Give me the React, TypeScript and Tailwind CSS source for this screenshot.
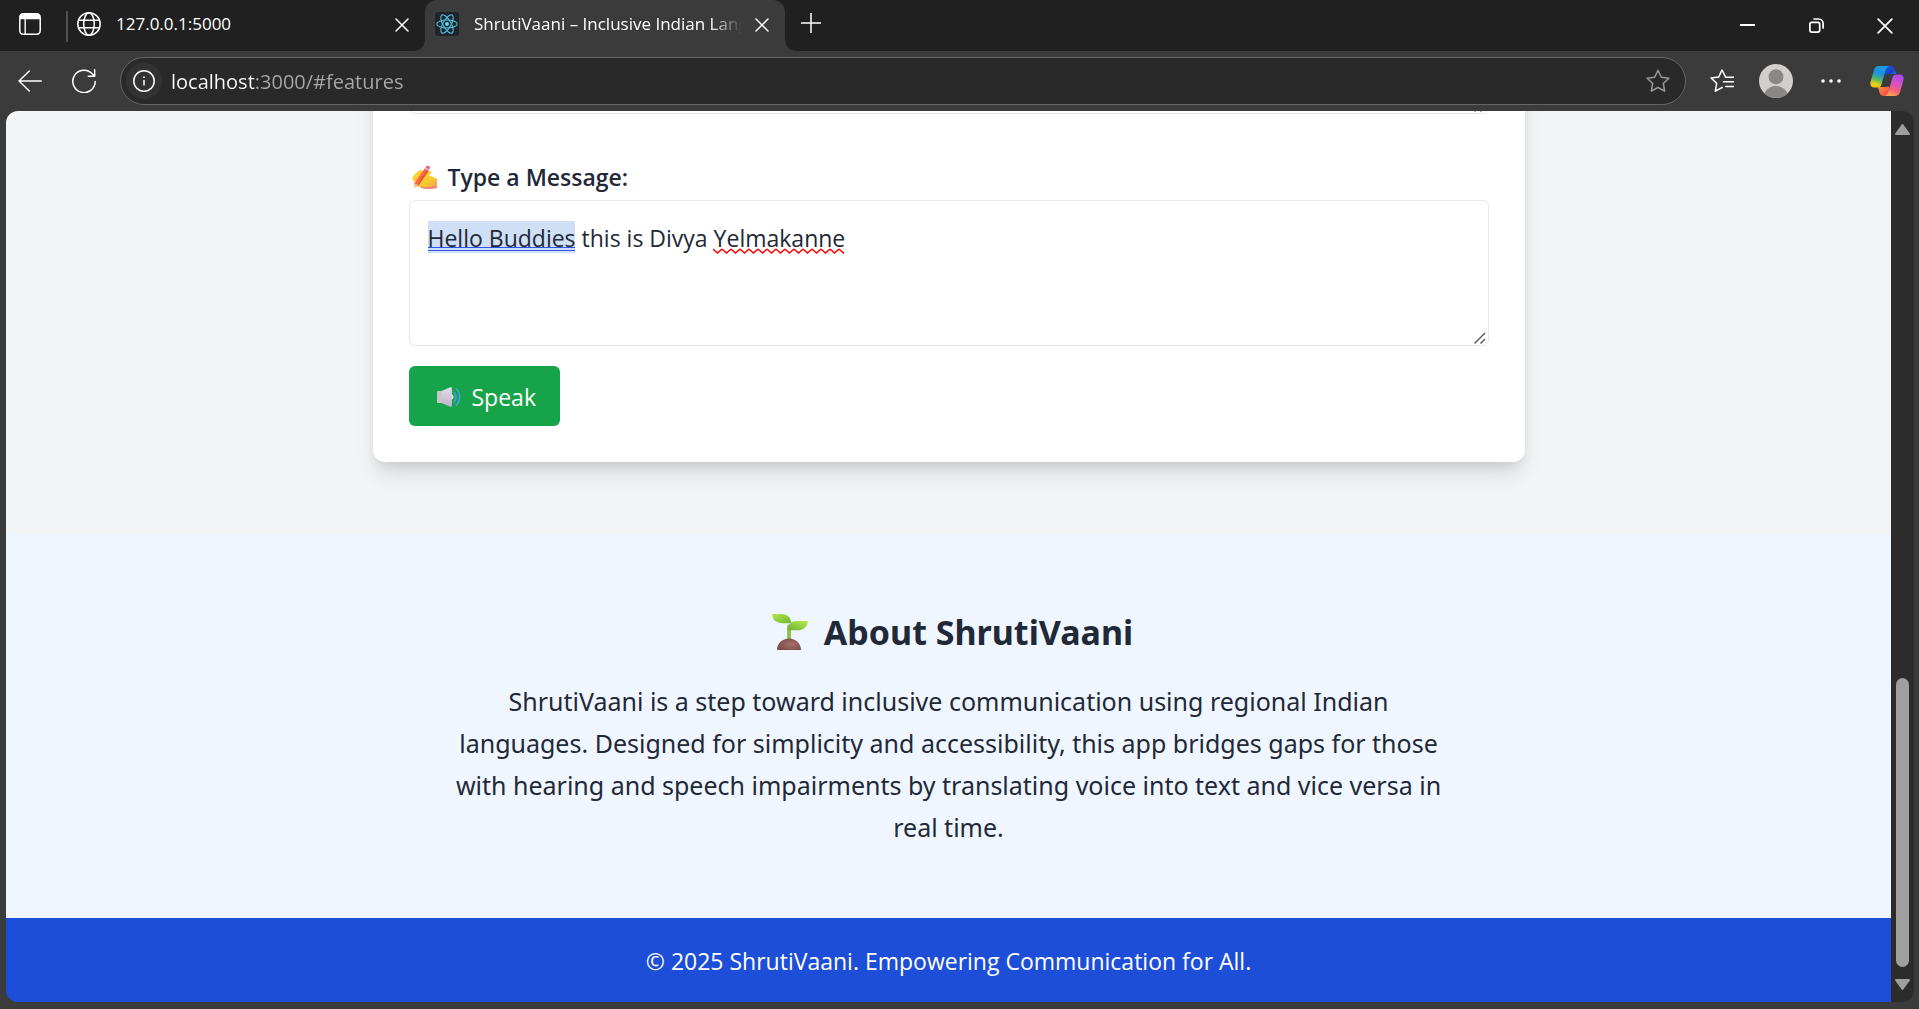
import React from "react";

type IconProps = { className?: string };

const CloseIcon = ({ className }: IconProps) => (
  <svg viewBox="0 0 14 14" className={className} fill="none" stroke="currentColor" strokeWidth="1.5" strokeLinecap="round">
    <path d="M1 1l12 12M13 1L1 13" />
  </svg>
);

const TabActionsIcon = () => (
  <svg viewBox="0 0 22 22" className="size-[22px]" fill="none">
    <rect x="0.8" y="0.8" width="20.4" height="20.4" rx="3.5" stroke="#fff" strokeWidth="1.5" />
    <path d="M0.8 6.2V4A3.4 3.4 0 0 1 4.2 .8h13.6A3.4 3.4 0 0 1 21.2 4v2.2z" fill="#fff" />
    <path d="M6.2 6v15" stroke="#fff" strokeWidth="1.4" />
  </svg>
);

const GlobeIcon = () => (
  <svg viewBox="0 0 24 24" className="size-6" fill="none" stroke="#fff" strokeWidth="1.5">
    <circle cx="12" cy="12" r="11.2" />
    <ellipse cx="12" cy="12" rx="5.3" ry="11.2" />
    <path d="M1.7 8.2h20.6M1.7 15.8h20.6" />
  </svg>
);

const ReactIcon = () => (
  <svg viewBox="0 0 24 24" className="size-6" fill="none">
    <rect width="24" height="24" rx="3" fill="#20232a" />
    <circle cx="12" cy="12" r="2" fill="#61dafb" />
    <g stroke="#4fbfdf" strokeWidth="1.1">
      <ellipse cx="12" cy="12" rx="10.3" ry="4" />
      <ellipse cx="12" cy="12" rx="10.3" ry="4" transform="rotate(60 12 12)" />
      <ellipse cx="12" cy="12" rx="10.3" ry="4" transform="rotate(120 12 12)" />
    </g>
  </svg>
);

const starPath = "M12 1.2l3.3 7 7.6 1-5.6 5.3 1.4 7.7L12 18.5l-6.7 3.7 1.4-7.7L1.1 9.2l7.6-1z";

const CopilotIcon = () => (
  <svg viewBox="0 0 34 32" className="h-8 w-[34px]">
    <defs>
      <linearGradient id="cpLeft" x1="0.6" y1="0" x2="0.3" y2="1">
        <stop offset="0" stopColor="#1b9de2" />
        <stop offset="0.35" stopColor="#1c8fe8" />
        <stop offset="0.62" stopColor="#4cb46b" />
        <stop offset="0.85" stopColor="#e0cf20" />
        <stop offset="1" stopColor="#f7c50c" />
      </linearGradient>
      <linearGradient id="cpRight" x1="0.7" y1="0" x2="0.35" y2="1">
        <stop offset="0" stopColor="#a648f0" />
        <stop offset="0.4" stopColor="#d951c4" />
        <stop offset="0.7" stopColor="#f4607b" />
        <stop offset="1" stopColor="#fda652" />
      </linearGradient>
      <linearGradient id="cpTop" x1="0" y1="0" x2="1" y2="1">
        <stop offset="0" stopColor="#0f5fe0" />
        <stop offset="0.6" stopColor="#1740c8" />
        <stop offset="1" stopColor="#2a7cf0" />
      </linearGradient>
      <linearGradient id="cpBottom" x1="0" y1="0" x2="1" y2="1">
        <stop offset="0" stopColor="#fb9a3c" />
        <stop offset="1" stopColor="#ee3a4f" />
      </linearGradient>
    </defs>
    <path d="M15 1h5.500c2.500 0 3.800 1.500 4.400 3.600l1.300 4.400h-4.700c-2.500 0-4.500 0-6 1.300z" fill="url(#cpTop)" />
    <path d="M19 31h-5c-2.500 0-3.800-1.300-4.500-3.600L8 22h5c2.300 0 4.600.2 6.200-.7z" fill="url(#cpBottom)" />
    <path d="M9.500 1H20c-2.300 0-3.700 1.700-4.400 4.200l-3.800 13.200c-.7 2.500-1.700 4.100-4.500 4.100H4.300C1.200 22.500-.3 20 .6 16.700L4 5C4.800 2.300 6.400 1 9.500 1z" fill="url(#cpLeft)" />
    <path d="M24.500 31H14c2.300 0 3.700-1.700 4.400-4.200l3.800-13.200c.7-2.500 1.700-4.100 4.500-4.100h3c3.100 0 4.600 2.500 3.700 5.800L30 27c-.8 2.700-2.400 4-5.500 4z" fill="url(#cpRight)" />
  </svg>
);

const WritingHandIcon = () => (
  <svg viewBox="0 0 25 24" className="h-6 w-[25px] shrink-0" role="img" aria-label="Writing hand">
    <defs>
      <linearGradient id="handFill" x1="0" y1="0" x2="1" y2="1">
        <stop offset="0" stopColor="#ffd43a" />
        <stop offset="0.65" stopColor="#f9c92c" />
        <stop offset="1" stopColor="#f28c6c" />
      </linearGradient>
    </defs>
    <path d="M.5 12.500c1.200-2.600 5.600-6.700 8.200-7.800l3.900 2.600 5.500-1.100c1.500-.1 2 1.300.9 2.200l-2.500 2.100c3.200.4 5.800 2.300 8.500 3.200v9.400c-4.800 1.200-13 .9-17-.8-3.300-1.400-3.800-2.700-3.200-4.900-2.300-.3-5.200-2.900-4.300-4.900z" fill="url(#handFill)" />
    <path d="M9 22c4.500 1.600 10 1.300 15.500.3" stroke="#ef7f7f" strokeWidth="1.600" fill="none" />
    <path d="M13 3l4 2.200L6.500 20.300l-3.700 2.500-.4-4.600z" fill="#fa6a42" />
    <path d="M15.200 4.300l1.800.9L6.500 20.300l-1.700 1z" fill="#e2512f" />
    <path d="M2.500 18.600l.3 4.200 3.700-2.500z" fill="#f6c79b" />
    <path d="M12.700 3.700l3.700 2.100.9-1.400-3.700-2.100z" fill="#c6cbd8" />
    <path d="M13.500 2.500l1-1.400c.8-1 4 .6 3.500 1.900l-.8 1.500z" fill="#ee5b70" />
  </svg>
);

const SpeakerIcon = () => (
  <svg viewBox="0 0 24 20" className="h-5 w-6 shrink-0" aria-hidden="true">
    <defs>
      <linearGradient id="cone" x1="0" y1="0" x2="0" y2="1">
        <stop offset="0" stopColor="#e3dde8" />
        <stop offset="1" stopColor="#bdb2c6" />
      </linearGradient>
    </defs>
    <path d="M14.500 7.300a2.800 2.800 0 0 1 0 5.400z" fill="#f3eef7" />
    <path d="M0 5.200C0 4.400.5 4 1.200 4H5v12H1.200C.5 16 0 15.600 0 14.800z" fill="#c9c3ce" />
    <path d="M4.500 4l8.200-3.600c1.200-.5 2.300 0 2.300 1.200v16.800c0 1.200-1.100 1.700-2.300 1.200L4.500 16z" fill="url(#cone)" />
    <path d="M17.300 5.400c2.300 2.600 2.300 6.600 0 9.200M19.200 1.800c4.600 4.600 4.600 11.800 0 16.400" stroke="#4a9cf5" strokeWidth="1.500" strokeLinecap="round" fill="none" />
  </svg>
);

const SeedlingIcon = () => (
  <svg viewBox="0 0 36 36" className="size-9 shrink-0" role="img" aria-label="Seedling">
    <defs>
      <linearGradient id="leafL" x1="0" y1="0" x2="1" y2="1">
        <stop offset="0" stopColor="#b4e84a" />
        <stop offset="1" stopColor="#6db82f" />
      </linearGradient>
      <linearGradient id="leafR" x1="1" y1="0" x2="0" y2="1">
        <stop offset="0" stopColor="#b7ee48" />
        <stop offset="1" stopColor="#6fae3c" />
      </linearGradient>
      <radialGradient id="soil" cx="0.6" cy="0.5" r="0.6">
        <stop offset="0" stopColor="#a4716c" />
        <stop offset="1" stopColor="#7d4d48" />
      </radialGradient>
    </defs>
    <path d="M15.200 26V12c0-2 3.700-2 3.700 0v14z" fill="#84c440" />
    <path d="M0 .8C0 .3.4 0 1 0h8.500C15.500 0 19 3.700 19 9.200H10.500C4.500 9.200.6 6 0 .8z" fill="url(#leafL)" />
    <path d="M15.500 16.300c0-6 4-9.300 10-9.300H35c.7 0 1 .4.900 1C35.200 13 31.300 16.300 25.500 16.300z" fill="url(#leafR)" />
    <path d="M5 36c0-6.500 5.200-11.500 12-11.500S29 29.500 29 36z" fill="url(#soil)" />
  </svg>
);

const ResizeGrip = () => (
  <svg viewBox="0 0 12 12" className="pointer-events-none absolute right-[3px] bottom-[2px] size-3" stroke="#555" strokeWidth="1.400" aria-hidden="true">
    <path d="M.5 11.500L11 1M6.500 11.500L11 7" />
  </svg>
);

function TabStrip() {
  return (
    <header className="flex h-[51px] shrink-0 items-stretch bg-[#202020] text-[17px] text-white">
      <button aria-label="Tab actions" className="flex w-[60px] items-center justify-center pb-[3px]">
        <TabActionsIcon />
      </button>
      <div className="mt-[11px] ml-[6px] h-[31px] w-[2px] bg-[#505050]" />
      <div className="flex w-[357px] items-center pr-4 pb-[3px] pl-[9px]">
        <GlobeIcon />
        <span className="ml-[15px] flex-1">127.0.0.1:5000</span>
        <button aria-label="Close tab" className="pt-[2px]">
          <CloseIcon className="size-[14px]" />
        </button>
      </div>
      <div className="relative flex w-[360px] items-center rounded-t-xl bg-[#3b3b3b] pr-4 pb-[3px] pl-[10px] before:absolute before:bottom-0 before:-left-[10px] before:size-[10px] before:bg-[radial-gradient(circle_at_0_0,transparent_9px,#3b3b3b_10px)] after:absolute after:-right-[10px] after:bottom-0 after:size-[10px] after:bg-[radial-gradient(circle_at_100%_0,transparent_9px,#3b3b3b_10px)]">
        <ReactIcon />
        <span className="ml-[15px] w-[268px] overflow-hidden [mask-image:linear-gradient(90deg,#000_88%,transparent)] whitespace-nowrap">
          ShrutiVaani – Inclusive Indian Lang
        </span>
        <button aria-label="Close tab" className="ml-auto pt-[2px]">
          <CloseIcon className="size-[14px]" />
        </button>
      </div>
      <button aria-label="New tab" className="ml-4 pb-[5px]">
        <svg viewBox="0 0 20 20" className="size-5" stroke="#fff" strokeWidth="1.500">
          <path d="M10 0v20M0 10h20" />
        </svg>
      </button>
      <div className="ml-auto flex items-center">
        <button aria-label="Minimize" className="flex w-[69px] justify-center">
          <svg viewBox="0 0 15 15" className="size-[15px]" stroke="#fff" strokeWidth="2">
            <path d="M0 7h15" />
          </svg>
        </button>
        <button aria-label="Restore" className="flex w-[69px] justify-center">
          <svg viewBox="0 0 15 15" className="size-[15px]" fill="none" stroke="#fff" strokeWidth="1.700">
            <rect x="0.900" y="4.300" width="9.800" height="9.800" rx="2" />
            <path d="M5 1h4.500A4.600 4.600 0 0 1 14.100 5.600V10" strokeLinecap="round" />
          </svg>
        </button>
        <button aria-label="Close" className="flex w-[68px] justify-center">
          <CloseIcon className="size-4" />
        </button>
      </div>
    </header>
  );
}

function AddressBar() {
  return (
    <div className="flex h-[60px] shrink-0 items-center bg-[#3b3b3b] text-white">
      <button aria-label="Back" className="flex w-[60px] justify-center">
        <svg viewBox="0 0 24 22" className="h-[22px] w-6" fill="none" stroke="#fff" strokeWidth="1.500" strokeLinecap="round" strokeLinejoin="round">
          <path d="M23.300 11H1M11.300 1L1 11l10.300 10" />
        </svg>
      </button>
      <button aria-label="Refresh" className="flex w-12 justify-center">
        <svg viewBox="0 0 24 24" className="size-6" fill="none" stroke="#fff" strokeWidth="1.500" strokeLinecap="round" strokeLinejoin="round">
          <path d="M23.200 12.500A11.200 11.200 0 1 1 20.400 5l2 2M22.700.8v6.400h-6.400" />
        </svg>
      </button>
      <form className="ml-3 flex h-12 flex-1 items-center rounded-full border border-[#666] bg-[#292929] pr-[15px] pl-[5px]">
        <button type="button" aria-label="View site information" className="flex size-9 items-center justify-center rounded-full bg-[#333]">
          <svg viewBox="0 0 22 22" className="size-[22px]" fill="none" stroke="#fff" strokeWidth="1.500">
            <circle cx="11" cy="11" r="10.200" />
            <path d="M11 10v5.500" />
            <circle cx="11" cy="7.200" r="0.500" fill="#fff" strokeWidth="1" />
          </svg>
        </button>
        <input
          aria-label="Address"
          defaultValue="localhost:3000/#features"
          className="ml-[9px] h-9 min-w-0 flex-1 bg-[linear-gradient(90deg,#fff_84px,#a8a8a8_84px)] bg-clip-text text-[20px] text-transparent outline-none"
        />
        <button type="button" aria-label="Add to favorites">
          <svg viewBox="0 0 24 24" className="size-6" fill="none" stroke="#9a9a9a" strokeWidth="1.500" strokeLinejoin="round">
            <path d={starPath} />
          </svg>
        </button>
      </form>
      <div className="flex items-center">
        <button aria-label="Favorites" className="ml-6">
          <svg viewBox="0 0 24 24" className="size-6" fill="none" stroke="#fff" strokeWidth="1.500" strokeLinejoin="round" strokeLinecap="round">
            <path d="M22.500 8.200h-6.900L12 1 8.800 7.900 1 8.900l5.700 5.300-1.400 8 6.900-3.700M15.800 8.200H24M13.500 12.800H24M15.800 17.500H24" />
          </svg>
        </button>
        <button aria-label="Profile" className="ml-[25px]">
          <svg viewBox="0 0 34 34" className="size-[34px]">
            <circle cx="17" cy="17" r="17" fill="#d2d0ce" />
            <circle cx="17" cy="12.800" r="7.500" fill="#8a8886" />
            <path d="M5.500 29.500C7.500 24.500 12 22 17 22s9.500 2.500 11.500 7.500A17 17 0 0 1 17 34a17 17 0 0 1-11.500-4.500z" fill="#8a8886" />
          </svg>
        </button>
        <button aria-label="Settings and more" className="ml-7">
          <svg viewBox="0 0 20 4" className="h-1 w-5" fill="#fff">
            <circle cx="2" cy="2" r="1.800" />
            <circle cx="10" cy="2" r="1.800" />
            <circle cx="18" cy="2" r="1.800" />
          </svg>
        </button>
        <button aria-label="Copilot" className="mr-[15px] ml-[29px]">
          <CopilotIcon />
        </button>
      </div>
    </div>
  );
}

function MessageCard() {
  return (
    <section className="bg-[#f3f4f6] px-9 pb-[72px]">
      <div className="mx-auto max-w-[1152px] rounded-xl bg-white p-9 shadow-[0_15px_22px_-4px_rgba(0,0,0,0.12),0_6px_12px_-3px_rgba(0,0,0,0.08)]">
        <div className="relative mb-[45px]">
          <textarea
            aria-label="Transcript"
            className="block h-[147px] w-full resize-none rounded-md border border-[#e5e7eb] p-[18px] outline-none"
          />
          <ResizeGrip />
        </div>
        <label htmlFor="message" className="mb-[5px] flex h-9 items-center gap-[11px] pl-[3px] text-[23px] font-semibold">
          <WritingHandIcon />
          Type a Message:
        </label>
        <div className="relative mb-5">
          <div className="absolute top-[21px] left-[19px] h-8 w-[147px] bg-[#cfdff6]">
            <div className="absolute bottom-[2px] h-1 w-full border-y border-[#2f54eb]" />
          </div>
          <textarea
            id="message"
            spellCheck={false}
            defaultValue="Hello Buddies this is Divya Yelmakanne"
            className="relative block h-[146px] w-full resize-none rounded-md border border-[#e5e7eb] p-[18px] text-[23px] leading-[38px] outline-none"
          />
          <svg className="pointer-events-none absolute top-12 left-[304px] h-[6px] w-[131px]" fill="none" stroke="#f00" strokeWidth="1.500" aria-hidden="true">
            <defs>
              <pattern id="squiggle" width="9" height="6" patternUnits="userSpaceOnUse">
                <path d="M0 1l4.500 4L9 1" />
              </pattern>
            </defs>
            <rect width="131" height="6" fill="url(#squiggle)" stroke="none" />
          </svg>
          <ResizeGrip />
        </div>
        <button className="flex h-[60px] items-center gap-[11px] rounded-md bg-[#16a34a] pt-[2px] pr-6 pl-7 text-[23px] text-white">
          <SpeakerIcon />
          Speak
        </button>
      </div>
    </section>
  );
}

function Scrollbar() {
  return (
    <div className="flex w-[23px] shrink-0 flex-col items-center bg-[#2c2c2c] py-[11px]" aria-hidden="true">
      <svg viewBox="0 0 15 12" className="mt-[1px] h-3 w-[15px] shrink-0" fill="#9f9f9f" stroke="#9f9f9f" strokeWidth="2" strokeLinejoin="round">
        <path d="M7.500 2L14 11H1z" />
      </svg>
      <div className="flex min-h-0 flex-1 flex-col py-3">
        <div className="flex-[532]" />
        <div className="w-[13px] flex-[289] rounded-full bg-[#9f9f9f]" />
      </div>
      <svg viewBox="0 0 15 12" className="h-3 w-[15px] shrink-0" fill="#9f9f9f" stroke="#9f9f9f" strokeWidth="2" strokeLinejoin="round">
        <path d="M7.500 10L14 1H1z" />
      </svg>
    </div>
  );
}

export default function App() {
  return (
    <div className="flex h-screen flex-col overflow-hidden bg-[#3b3b3b] font-['Open_Sans','Noto_Sans',sans-serif]">
      <TabStrip />
      <AddressBar />
      <div className="mr-[5px] mb-[7px] ml-[6px] flex min-h-0 flex-1 overflow-hidden rounded-xl">
        <main className="flex min-w-0 flex-1 flex-col justify-end overflow-hidden text-[#1f2937]">
          <MessageCard />
          <section className="bg-[#eff6ff] px-9 pt-[74px] pb-[70px] text-center font-['Noto_Sans',sans-serif]">
            <h2 className="mb-6 flex h-12 items-center justify-center gap-4 pl-2 text-[34px] font-bold">
              <SeedlingIcon />
              About ShrutiVaani
            </h2>
            <p className="mx-auto max-w-[1008px] text-[25px] leading-[42px]">
              ShrutiVaani is a step toward inclusive communication using regional Indian languages. Designed for
              simplicity and accessibility, this app bridges gaps for those with hearing and speech impairments by
              translating voice into text and vice versa in real time.
            </p>
          </section>
          <footer className="bg-[#1d4ed8] pt-[25px] pb-[23px] text-center text-[23px] leading-[36px] text-white">
            © 2025 ShrutiVaani. Empowering Communication for All.
          </footer>
        </main>
        <Scrollbar />
      </div>
    </div>
  );
}
